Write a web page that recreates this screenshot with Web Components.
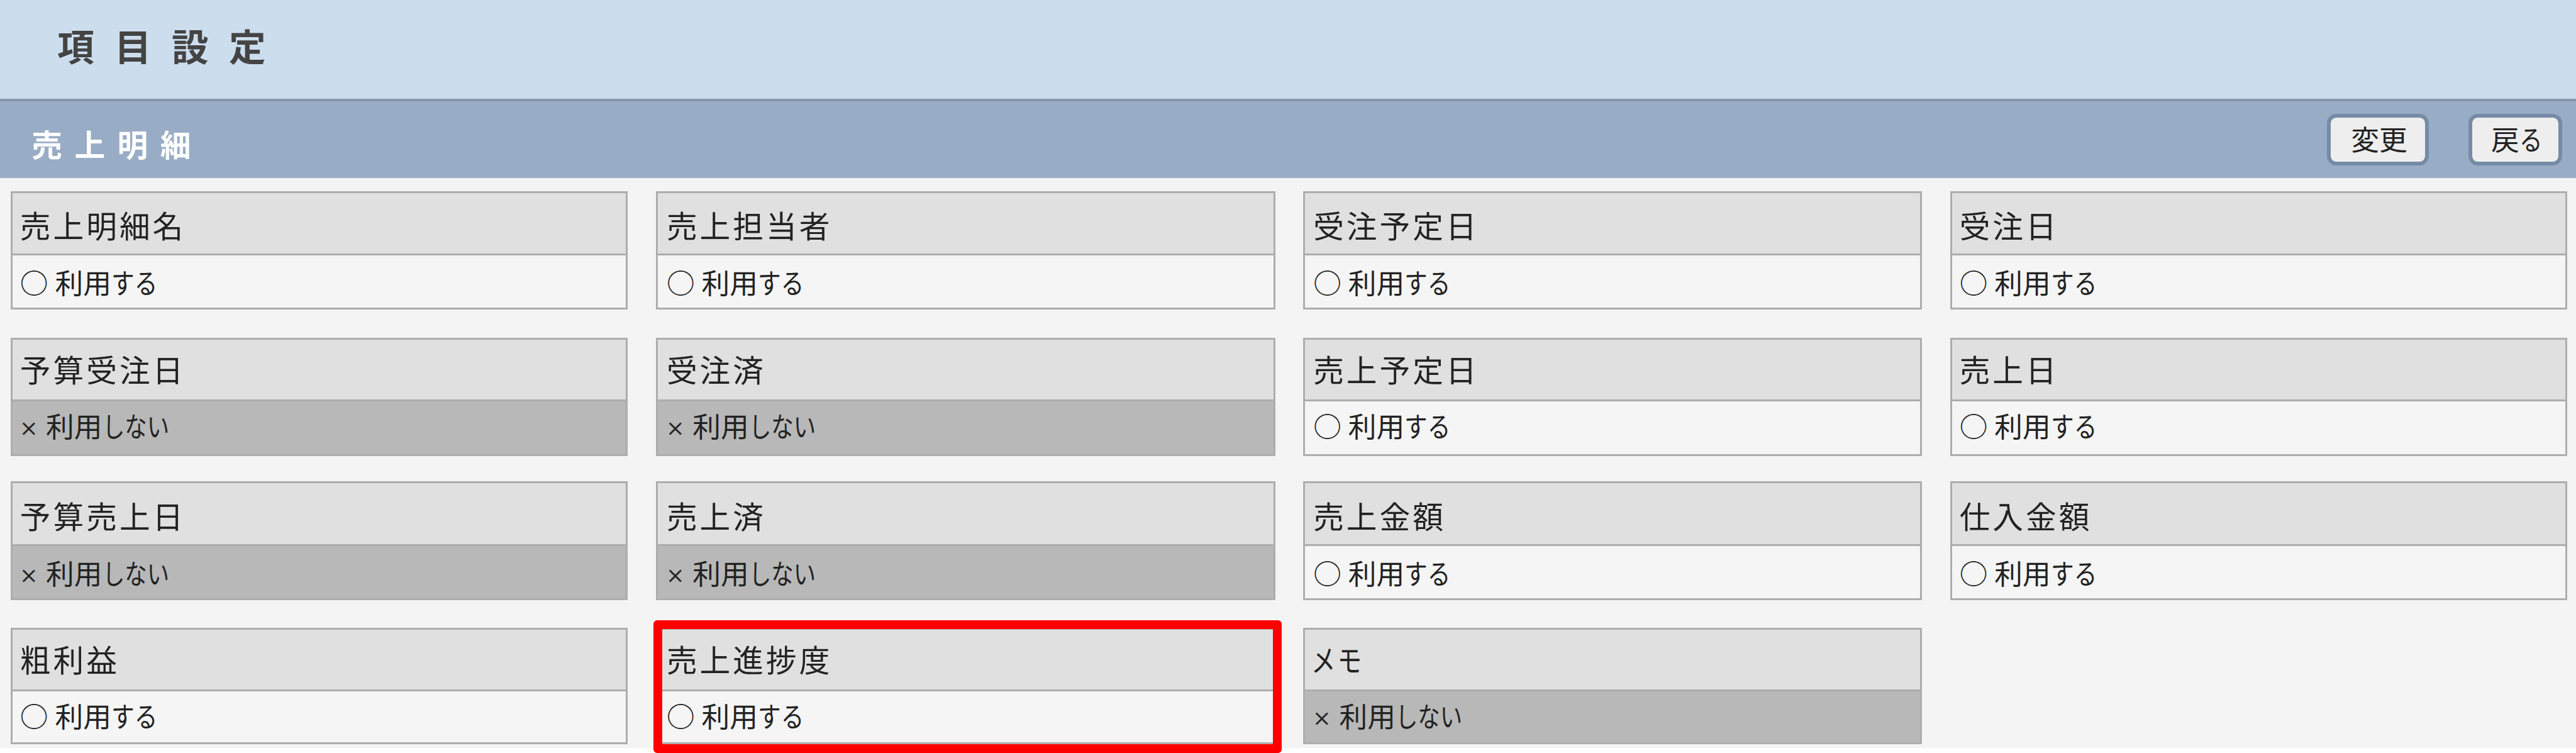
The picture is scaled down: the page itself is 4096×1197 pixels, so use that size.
<!DOCTYPE html>
<html lang="ja">
<head>
<meta charset="utf-8">
<title>項目設定</title>
<style>
:root{--u:.99442px}
html{background:#fff}
body{margin:0;height:1197px;color:#222;font-family:"Noto Sans CJK JP",sans-serif}
</style>
</head>
<body>
<settings-page>
  <page-heading slot="top">項目設定</page-heading>
  <section-bar slot="bar">売上明細
    <push-button slot="actions" style="--w:163">変更</push-button>
    <push-button slot="actions" style="--w:150;--p:30">戻<kana-text>る</kana-text></push-button>
  </section-bar>
  <field-grid></field-grid>
</settings-page>
<script>
function define(name, html, setup) {
  const template = document.createElement('template');
  template.innerHTML = html;
  customElements.define(name, class extends HTMLElement {
    constructor() {
      super();
      this.attachShadow({ mode: 'open' }).append(template.content.cloneNode(true));
    }
    connectedCallback() { if (setup) setup(this, this.shadowRoot); }
  });
}

define('kana-text', `<style>
:host{display:inline-block;white-space:nowrap;transform:scaleX(var(--kana,.82));transform-origin:0 50%}
</style><slot></slot>`);

define('settings-page', `<style>
:host{display:flex;flex-direction:column;height:calc(var(--u)*1195.7);background:#f4f4f4}
</style><slot name="top"></slot><slot name="bar"></slot><slot></slot>`);

define('page-heading', `<style>
:host{display:block;box-sizing:border-box;height:calc(var(--u)*162);padding:calc(var(--u)*32) 0 0 calc(var(--u)*91.5);
 background:#ccddee;border-bottom:4px solid #8296ac;color:#444;font-weight:700;font-size:calc(var(--u)*59);
 line-height:calc(var(--u)*80);letter-spacing:calc(var(--u)*32.5)}
</style><slot></slot>`);

define('section-bar', `<style>
:host{display:flex;justify-content:space-between;align-items:flex-start;box-sizing:border-box;height:calc(var(--u)*123);
 padding:0 calc(var(--u)*21.7) 0 calc(var(--u)*50.5);background:#99acc5}
.name{padding-top:calc(var(--u)*31.6);color:#fff;font-weight:700;font-size:calc(var(--u)*49);line-height:calc(var(--u)*70);letter-spacing:calc(var(--u)*19.6)}
.actions{display:flex;gap:calc(var(--u)*63.7);padding-top:calc(var(--u)*20.3)}
</style><div class="name"><slot></slot></div><div class="actions"><slot name="actions"></slot></div>`);

define('push-button', `<style>
:host{display:block;box-sizing:border-box;width:calc(var(--u)*var(--w));height:calc(var(--u)*82);padding:calc(var(--u)*2.5) 0 0 calc(var(--u)*var(--p,32.5));
 border:6px solid #758ba5;border-radius:calc(var(--u)*15);background:#eee;font-size:calc(var(--u)*45);line-height:calc(var(--u)*60);white-space:nowrap;cursor:pointer}
</style><slot></slot>`);

define('field-card', `<style>
:host{display:flex;flex-direction:column;position:relative;box-sizing:border-box;border:3px solid #adadad;background:#f5f5f5;--s:0}
:host([tight]){--s:4.2}
:host([off]){background:#b8b8b8}
.name,.state{box-sizing:border-box;padding-left:calc(var(--u)*var(--x,11.5));white-space:nowrap}
.name{height:calc(var(--u)*100);padding-top:calc(var(--u)*(20.8 - var(--s)));border-bottom:3px solid #adadad;background:#e0e0e0;
 font-size:calc(var(--u)*49);line-height:calc(var(--u)*60);letter-spacing:calc(var(--u)*4)}
:host([tight]) .name{height:calc(var(--u)*99)}
.state{display:flex;padding-top:calc(var(--u)*(14.2 - var(--s)));font-size:calc(var(--u)*45);line-height:calc(var(--u)*56)}
.mark{flex:none;width:calc(var(--u)*56)}
:host([off]) .mark{width:calc(var(--u)*41.5)}
:host([off]){--kana:.79}
.mark b{display:inline-block;font-weight:400}
:host([off]) .mark b{transform:translate(-1px,3px) scale(.66);transform-origin:0 55%;-webkit-text-stroke:1px}
.ring{display:none;position:absolute;left:calc(var(--u)*-7);top:calc(var(--u)*-15);width:calc(var(--u)*976);height:calc(var(--u)*184);
 border:14px solid #f00;border-radius:calc(var(--u)*6)}
:host([marked]) .ring{display:block}
</style><div class="name"><slot></slot></div><div class="state"><span class="mark"><b></b></span><span class="text"></span></div><div class="ring"></div>`,
(host, root) => {
  const off = host.hasAttribute('off');
  root.querySelector('b').textContent = off ? '×' : '○';
  root.querySelector('.text').innerHTML = '利用<kana-text>' + (off ? 'しない' : 'する') + '</kana-text>';
});

define('field-grid', `<style>
:host{display:grid;grid-template-columns:986.3fr 990fr 989.7fr 986.3fr;column-gap:calc(var(--u)*45);
 grid-template-rows:calc(var(--u)*189.2) calc(var(--u)*189.3) calc(var(--u)*189.3) calc(var(--u)*186);
 padding:calc(var(--u)*20.5) calc(var(--u)*14) 0 calc(var(--u)*17.5)}
field-card:nth-of-type(n+5){margin-top:calc(var(--u)*45);margin-bottom:calc(var(--u)*-45)}
field-card:nth-of-type(n+9){margin-top:calc(var(--u)*85.7);margin-bottom:calc(var(--u)*-85.7)}
field-card:nth-of-type(n+13){margin-top:calc(var(--u)*130.2);margin-bottom:calc(var(--u)*-130.2)}
field-card:nth-of-type(4n+2){--x:14}
field-card:nth-of-type(4n+3){--x:13}
field-card kana-text{margin-left:calc(var(--u)*-3.5)}
</style>
<field-card>売上明細名</field-card><field-card>売上担当者</field-card><field-card>受注予定日</field-card><field-card>受注日</field-card>
<field-card tight off>予算受注日</field-card><field-card tight off>受注済</field-card><field-card tight>売上予定日</field-card><field-card tight>売上日</field-card>
<field-card off>予算売上日</field-card><field-card off>売上済</field-card><field-card>売上金額</field-card><field-card>仕入金額</field-card>
<field-card tight>粗利益</field-card><field-card tight marked>売上進捗度</field-card><field-card tight off><kana-text>メモ</kana-text></field-card>`);
</script>
</body>
</html>
